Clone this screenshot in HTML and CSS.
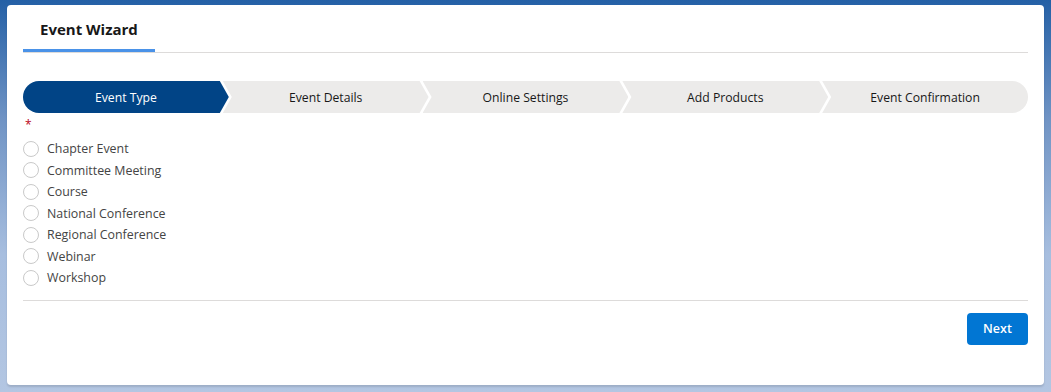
FILE: index.html
```html
<!DOCTYPE html>
<html lang="en">
<head>
  <meta charset="UTF-8">
  <title>Event Wizard</title>
  <link rel="stylesheet" href="styles.css">
</head>
<body>
  <div class="card">
    <div class="tab-bar">
      <div class="tab active">Event Wizard</div>
    </div>
    <ol class="path">
      <li class="step first current">Event Type</li>
      <li class="step">Event Details</li>
      <li class="step">Online Settings</li>
      <li class="step">Add Products</li>
      <li class="step last">Event Confirmation</li>
    </ol>
    <div class="required">*</div>
    <div class="radio-group">
      <label class="radio"><span class="faux"></span>Chapter Event</label>
      <label class="radio"><span class="faux"></span>Committee Meeting</label>
      <label class="radio"><span class="faux"></span>Course</label>
      <label class="radio"><span class="faux"></span>National Conference</label>
      <label class="radio"><span class="faux"></span>Regional Conference</label>
      <label class="radio"><span class="faux"></span>Webinar</label>
      <label class="radio"><span class="faux"></span>Workshop</label>
    </div>
    <div class="footer">
      <button class="btn-brand">Next</button>
    </div>
  </div>
</body>
</html>
```

FILE: styles.css
```css
* { margin: 0; padding: 0; box-sizing: border-box; }
body {
  font-family: 'Open Sans', 'Noto Sans', sans-serif;
  font-size: 12.4px;
  color: #3e3e3c;
  height: 392px;
  overflow: hidden;
  background: linear-gradient(180deg, #2460a6 0%, #6f93c4 30%, #a7bedf 65%, #b3c6e2 100%);
}
.card {
  margin: 5px 7px 0 7px;
  height: 380px;
  background: #fff;
  border-radius: 4px;
  padding: 0 16px;
  box-shadow: 0 2px 2px rgba(0,0,0,0.12);
}
.tab-bar {
  display: flex;
  border-bottom: 1px solid #dddbda;
  height: 48px;
}
.tab {
  padding: 14px 17px 0 17px;
  font-size: 15px;
  font-weight: 700;
  color: #181818;
  height: 47px;
}
.tab.active { border-bottom: 3px solid #4a92e8; }
.path {
  list-style: none;
  display: flex;
  margin-top: 28px;
  height: 32px;
}
.step {
  flex: 1;
  display: flex;
  align-items: center;
  justify-content: center;
  background: #ecebea;
  color: #181818;
  font-size: 12.2px;
  margin-left: -6px;
  clip-path: polygon(0 0, calc(100% - 9px) 0, 100% 50%, calc(100% - 9px) 100%, 0 100%, 9px 50%);
}
.step.first {
  margin-left: 0;
  border-radius: 16px 0 0 16px;
  clip-path: polygon(0 0, calc(100% - 9px) 0, 100% 50%, calc(100% - 9px) 100%, 0 100%);
}
.step.last {
  border-radius: 0 16px 16px 0;
  clip-path: polygon(0 0, 100% 0, 100% 100%, 0 100%, 9px 50%);
}
.step.current { background: #014486; color: #fff; }
.required {
  color: #ba0517;
  font-size: 12px;
  line-height: 14px;
  height: 25px;
  padding-top: 5px;
  padding-left: 2px;
}
.radio {
  display: flex;
  align-items: center;
  height: 21.5px;
  color: #444;
}
.faux {
  width: 16px;
  height: 16px;
  border: 1px solid #c9c9c9;
  border-radius: 50%;
  margin-right: 8px;
}
.footer {
  margin-top: 11px;
  border-top: 1px solid #dddbda;
  padding-top: 12px;
  display: flex;
  justify-content: flex-end;
}
.btn-brand {
  width: 61px;
  height: 32px;
  border: none;
  border-radius: 4px;
  background: #0176d3;
  color: #fff;
  font-family: inherit;
  font-size: 12.5px;
  font-weight: 600;
}
```
